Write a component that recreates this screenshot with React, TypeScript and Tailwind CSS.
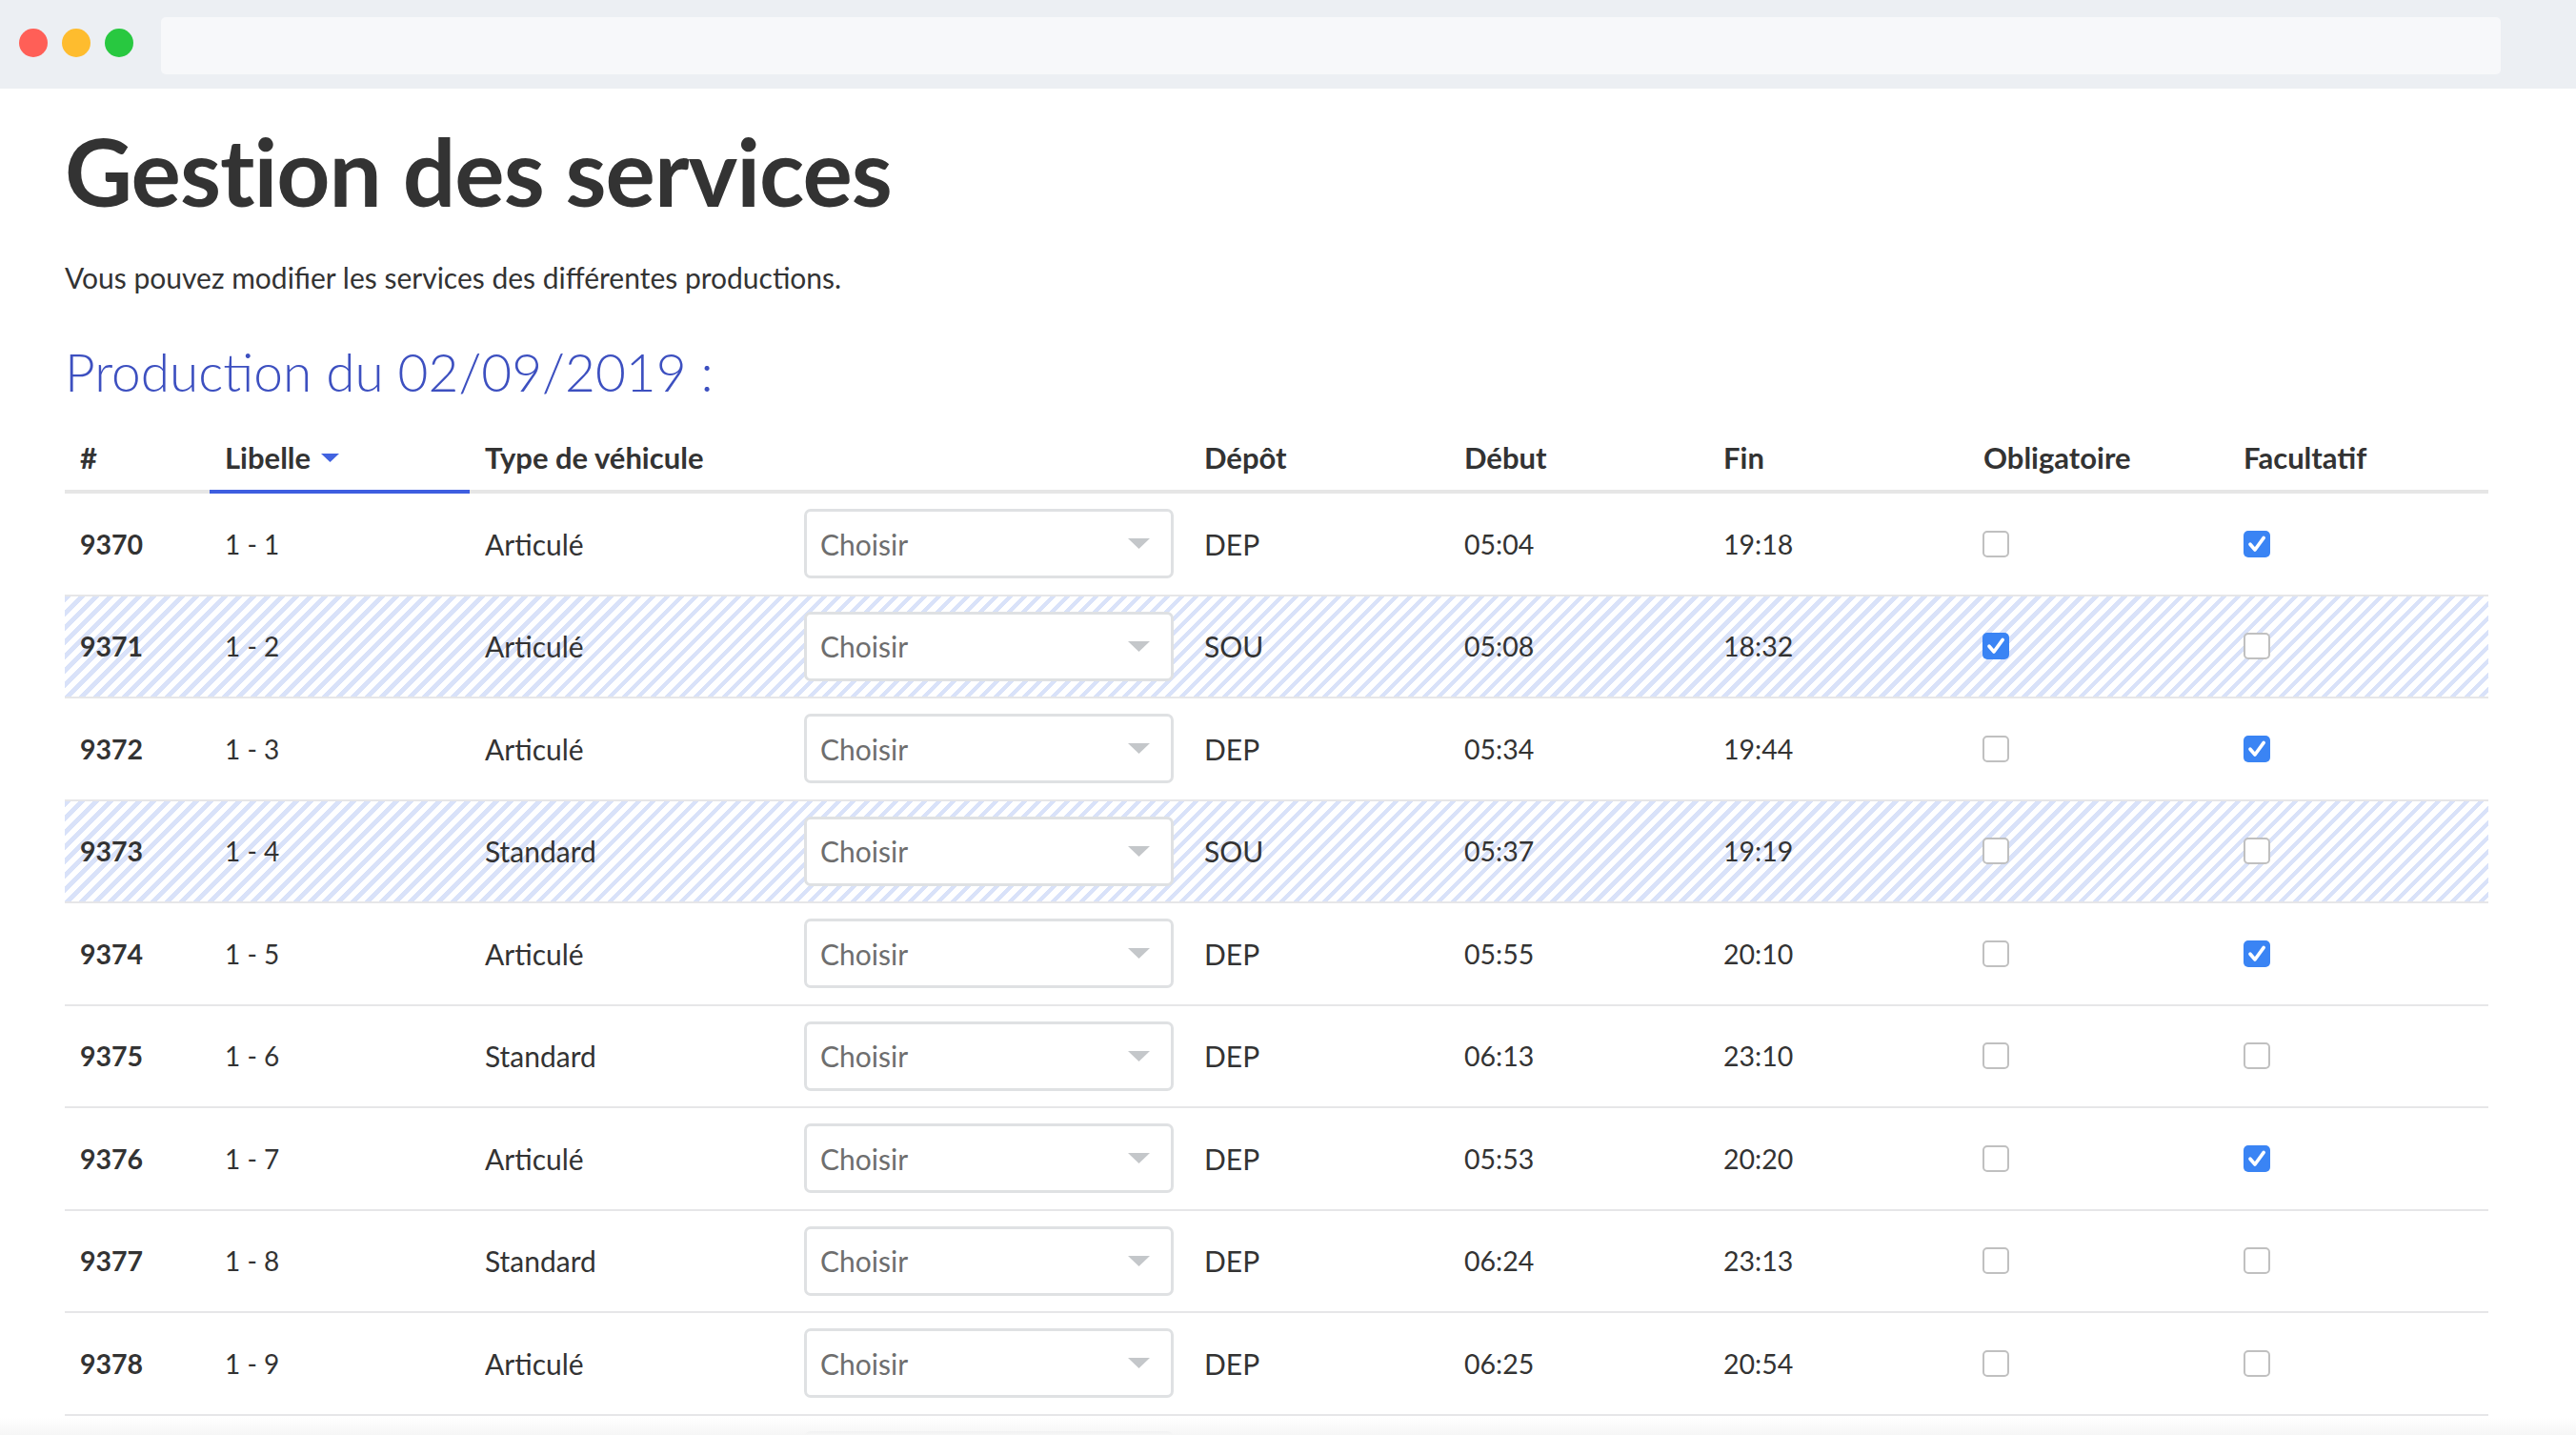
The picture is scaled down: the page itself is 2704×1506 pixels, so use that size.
import React from "react";

type Row = {
  id: string;
  lib: string;
  type: string;
  depot: string;
  debut: string;
  fin: string;
  obl: boolean;
  fac: boolean;
  hatch: boolean;
};

const rows: Row[] = [
  { id: "9370", lib: "1 - 1", type: "Articulé", depot: "DEP", debut: "05:04", fin: "19:18", obl: false, fac: true, hatch: false },
  { id: "9371", lib: "1 - 2", type: "Articulé", depot: "SOU", debut: "05:08", fin: "18:32", obl: true, fac: false, hatch: true },
  { id: "9372", lib: "1 - 3", type: "Articulé", depot: "DEP", debut: "05:34", fin: "19:44", obl: false, fac: true, hatch: false },
  { id: "9373", lib: "1 - 4", type: "Standard", depot: "SOU", debut: "05:37", fin: "19:19", obl: false, fac: false, hatch: true },
  { id: "9374", lib: "1 - 5", type: "Articulé", depot: "DEP", debut: "05:55", fin: "20:10", obl: false, fac: true, hatch: false },
  { id: "9375", lib: "1 - 6", type: "Standard", depot: "DEP", debut: "06:13", fin: "23:10", obl: false, fac: false, hatch: false },
  { id: "9376", lib: "1 - 7", type: "Articulé", depot: "DEP", debut: "05:53", fin: "20:20", obl: false, fac: true, hatch: false },
  { id: "9377", lib: "1 - 8", type: "Standard", depot: "DEP", debut: "06:24", fin: "23:13", obl: false, fac: false, hatch: false },
  { id: "9378", lib: "1 - 9", type: "Articulé", depot: "DEP", debut: "06:25", fin: "20:54", obl: false, fac: false, hatch: false },
];

const gridCols =
  "grid grid-cols-[152px_273px_335px_420px_273px_272px_273px_273px_272px]";

function Checkbox({ checked }: { checked: boolean }) {
  if (checked) {
    return (
      <div className="w-[28px] h-[28px] rounded-[5px] bg-[#3a84f4] flex items-center justify-center">
        <svg width="28" height="28" viewBox="0 0 28 28">
          <path
            d="M7 14.2 L12 20 L21.2 7.4"
            fill="none"
            stroke="white"
            strokeWidth="3.6"
            strokeLinecap="round"
            strokeLinejoin="round"
          />
        </svg>
      </div>
    );
  }
  return <div className="w-[28px] h-[28px] rounded-[5px] border-2 border-[#c0c0c0] bg-white" />;
}

function Select({ label = true }: { label?: boolean }) {
  return (
    <div className="w-[388px] h-[73px] rounded-[7px] border-[3px] border-[#dfe1e3] bg-white flex items-center justify-between pl-[14px] pr-[22px]">
      {label ? <span className="text-[30px] leading-none text-[#6e6e6e]">Choisir</span> : <span />}
      <svg width="23" height="11" viewBox="0 0 23 11">
        <polygon points="0,0 23,0 11.5,11" fill="#c4c7ca" />
      </svg>
    </div>
  );
}

export default function App() {
  return (
    <div className="relative w-[2704px] h-[1506px] overflow-hidden bg-white font-['Lato',sans-serif] text-[#333333]">
      {/* window title bar */}
      <div className="h-[93px] bg-[#eceff3] flex items-start">
        <div className="flex items-center gap-[15px] ml-[20px] mt-[30px]">
          <div className="w-[30px] h-[30px] rounded-full bg-[#ff5f57]" />
          <div className="w-[30px] h-[30px] rounded-full bg-[#febc2e]" />
          <div className="w-[30px] h-[30px] rounded-full bg-[#28c840]" />
        </div>
        <div className="flex-1 h-[60px] mt-[18px] ml-[29px] mr-[79px] rounded-[5px] bg-[#f7f8fa]" />
      </div>

      {/* content */}
      <div className="pl-[68px]">
        <h1 className="mt-[37px] text-[98px] leading-none font-bold text-[#333333] tracking-[-1px]">
          Gestion des services
        </h1>
        <p className="mt-[48px] text-[30px] leading-none text-[#333333]">
          Vous pouvez modifier les services des différentes productions.
        </p>
        <h2 className="mt-[57px] text-[55px] leading-none font-light text-[#3d50c0]">
          Production du 02/09/2019 :
        </h2>

        {/* table */}
        <div className="mt-[28px] w-[2544px]">
          <div className={`${gridCols} h-[68px] items-center text-[31px] font-bold leading-none`}>
            <div className="pl-[16px]">#</div>
            <div className="pl-[16px] flex items-center">
              <span>Libelle</span>
              <svg className="ml-[11px]" width="19" height="9" viewBox="0 0 19 9">
                <polygon points="0,0 19,0 9.5,9" fill="#4263e0" />
              </svg>
            </div>
            <div className="pl-[16px]">Type de véhicule</div>
            <div />
            <div className="pl-[16px]">Dépôt</div>
            <div className="pl-[16px]">Début</div>
            <div className="pl-[16px]">Fin</div>
            <div className="pl-[16px]">Obligatoire</div>
            <div className="pl-[16px]">Facultatif</div>
          </div>
          <div className={`${gridCols} h-[4px] bg-[#e6e6e6]`}>
            <div />
            <div className="bg-[#3e5ee0]" />
          </div>

          {rows.map((r) => (
            <div
              key={r.id}
              className={`${gridCols} h-[107.5px] items-center border-b-2 border-[#e6e6e8] text-[30px] leading-none ${
                r.hatch
                  ? "bg-[image:repeating-linear-gradient(135deg,#d9e2f9_0px,#d9e2f9_4.5px,#ffffff_4.5px,#ffffff_10.6px)]"
                  : "bg-white"
              }`}
            >
              <div className="pl-[16px] font-bold text-[28.5px]">{r.id}</div>
              <div className="pl-[16px] text-[28px]">{r.lib}</div>
              <div className="pl-[16px]">{r.type}</div>
              <div className="pl-[16px]">
                <Select />
              </div>
              <div className="pl-[16px]">{r.depot}</div>
              <div className="pl-[16px] text-[28.5px]">{r.debut}</div>
              <div className="pl-[16px] text-[28.5px]">{r.fin}</div>
              <div className="pl-[15px]">
                <Checkbox checked={r.obl} />
              </div>
              <div className="pl-[16px]">
                <Checkbox checked={r.fac} />
              </div>
            </div>
          ))}

          {/* next row, only its top edge is in view */}
          <div className={`${gridCols} h-[107.5px] items-start pt-[16px]`}>
            <div />
            <div />
            <div />
            <div className="pl-[16px]">
              <Select label={false} />
            </div>
          </div>
        </div>
      </div>

      {/* bottom fade */}
      <div className="absolute left-0 right-0 bottom-0 h-[18px] bg-gradient-to-b from-[#ffffff00] to-[#f6f6f6]" />
    </div>
  );
}
